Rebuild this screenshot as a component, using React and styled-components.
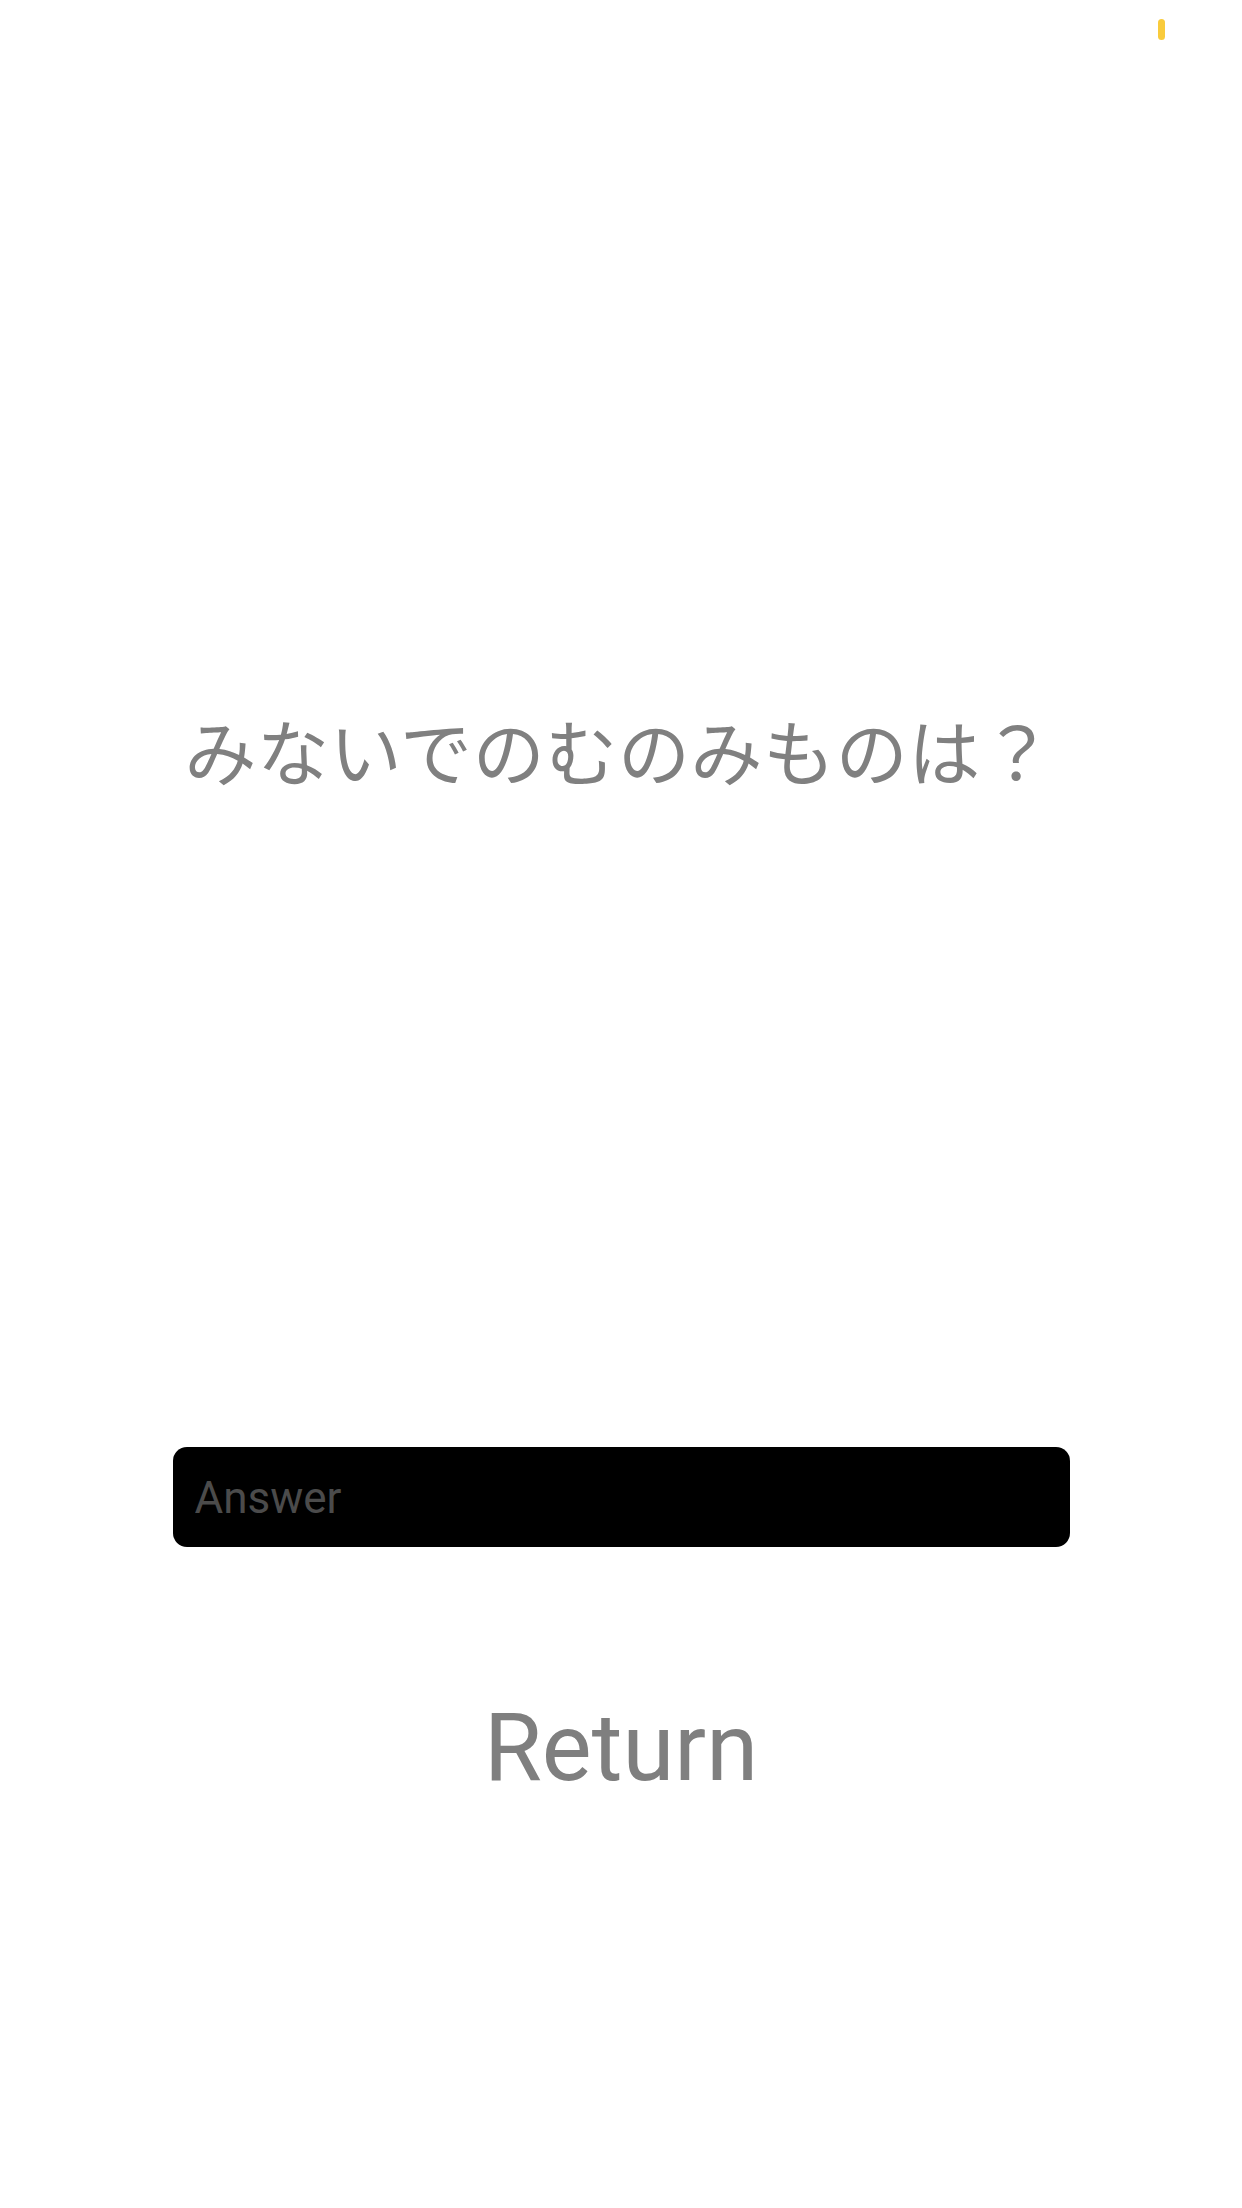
import React from "react";
import styled, { createGlobalStyle } from "styled-components";

const GlobalStyle = createGlobalStyle`
  html, body {
    margin: 0;
    padding: 0;
    background: #ffffff;
  }
  * { box-sizing: border-box; }
`;

const Screen = styled.main`
  position: relative;
  width: 1242px;
  height: 2208px;
  display: flex;
  flex-direction: column;
  align-items: center;
  padding-top: 707px;
  background: #ffffff;
  font-family: Roboto, "Noto Sans", sans-serif;
`;

const Indicator = styled.span`
  position: absolute;
  top: 19px;
  left: 1158px;
  width: 7px;
  height: 21px;
  border-radius: 4px;
  background: #f9cb3c;
`;

const Question = styled.h1`
  margin: 0 4px 0 0;
  font-family: "Noto Sans CJK JP", sans-serif;
  font-weight: 400;
  font-size: 72px;
  line-height: 84px;
  color: #808080;
  letter-spacing: 0.6px;
`;

const AnswerBox = styled.input`
  margin-top: 656px;
  width: 897px;
  height: 100px;
  border: none;
  border-radius: 14px;
  background: #000000;
  padding: 2px 22px 0;
  font-family: Roboto, sans-serif;
  font-size: 44px;
  color: #ffffff;
  outline: none;

  &::placeholder {
    color: #4b4b4b;
  }
`;

const ReturnButton = styled.button`
  margin-top: 144px;
  border: none;
  background: transparent;
  padding: 0;
  font-family: Roboto, sans-serif;
  font-size: 94px;
  line-height: 115px;
  color: #7f7f7f;
  cursor: pointer;
`;

export default function App() {
  return (
    <>
      <GlobalStyle />
      <Screen>
        <Indicator />
        <Question>みないでのむのみものは？</Question>
        <AnswerBox placeholder="Answer" />
        <ReturnButton>Return</ReturnButton>
      </Screen>
    </>
  );
}
